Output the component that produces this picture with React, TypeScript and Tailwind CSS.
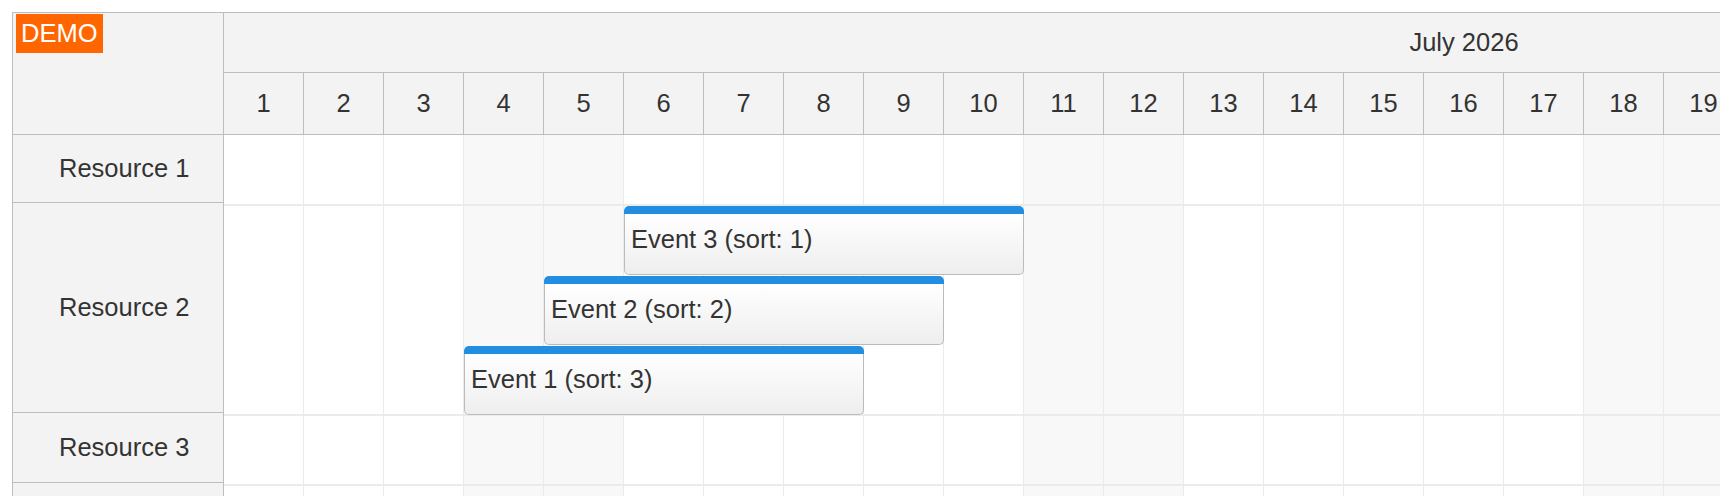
const days = Array.from({ length: 31 }, (_, i) => i + 1);
const weekend = [4, 5, 11, 12, 18, 19, 25, 26];

const resources = [
  { name: 'Resource 1', header: 'h-[68px]', row: 'h-[71px]' },
  { name: 'Resource 2', header: 'h-[210px]', row: 'h-[210px]' },
  { name: 'Resource 3', header: 'h-[70px]', row: 'h-[70px]' },
  { name: '', header: 'h-[70px]', row: 'h-[70px]' }
];

// events of Resource 2, one lane each
const events = [
  { text: 'Event 3 (sort: 1)', start: 6, days: 5, lane: 0 },
  { text: 'Event 2 (sort: 2)', start: 5, days: 5, lane: 1 },
  { text: 'Event 1 (sort: 3)', start: 4, days: 5, lane: 2 }
];

const CELL = 80;
const LANE = 70;

function EventBox({ text, start, days: span, lane }: (typeof events)[number]) {
  return (
    <div
      className="absolute flex h-[69px] flex-col"
      style={{ left: (start - 1) * CELL, top: lane * LANE, width: span * CELL }}
    >
      <div className="h-[8px] shrink-0 rounded-t-[5px] bg-[#218ee2]" />
      <div className="flex-1 rounded-b-[5px] border-x border-b border-[#bbbbbb] bg-gradient-to-b from-white to-[#eeeeee] pl-[6px] pt-[11px] leading-[29px] whitespace-nowrap">
        {text}
      </div>
    </div>
  );
}

export default function App() {
  return (
    <div className="h-[496px] w-full overflow-hidden bg-white pl-[12px] pt-[12px] font-['Liberation_Sans',Arial,sans-serif] text-[25.5px] text-[#333333]">
      <div className="w-max border-l border-t border-[#bdbdbd]">
        {/* header */}
        <div className="flex">
          <div className="relative h-[122px] w-[211px] shrink-0 border-b border-r border-[#bdbdbd] bg-[#f3f3f3]">
            <div className="absolute left-[3px] top-[1px] bg-[#ff6600] px-[5px] py-[5px] leading-[29px] text-white">
              DEMO
            </div>
          </div>
          <div className="flex flex-col">
            <div className="flex h-[60px] items-center justify-center border-b border-[#bdbdbd] bg-[#f3f3f3]">
              July 2026
            </div>
            <div className="flex h-[62px]">
              {days.map((d) => (
                <div
                  key={d}
                  className="flex w-[80px] shrink-0 items-center justify-center border-b border-r border-[#bdbdbd] bg-[#f3f3f3]"
                >
                  {d}
                </div>
              ))}
            </div>
          </div>
        </div>

        {/* body */}
        <div className="flex">
          <div className="flex w-[211px] shrink-0 flex-col">
            {resources.map((r, i) => (
              <div
                key={i}
                className={`${r.header} flex shrink-0 items-center border-b border-r border-[#bdbdbd] bg-[#f3f3f3] pl-[46px]`}
              >
                {r.name}
              </div>
            ))}
          </div>
          <div className="flex flex-col">
            {resources.map((r, i) => (
              <div key={i} className={`${r.row} relative flex shrink-0`}>
                {days.map((d) => (
                  <div
                    key={d}
                    className={`w-[80px] shrink-0 border-b-2 border-r border-[#ebebeb] ${
                      weekend.includes(d) ? 'bg-[#f8f8f8]' : 'bg-white'
                    }`}
                  />
                ))}
                {i === 1 && events.map((e) => <EventBox key={e.text} {...e} />)}
              </div>
            ))}
          </div>
        </div>
      </div>
    </div>
  );
}
